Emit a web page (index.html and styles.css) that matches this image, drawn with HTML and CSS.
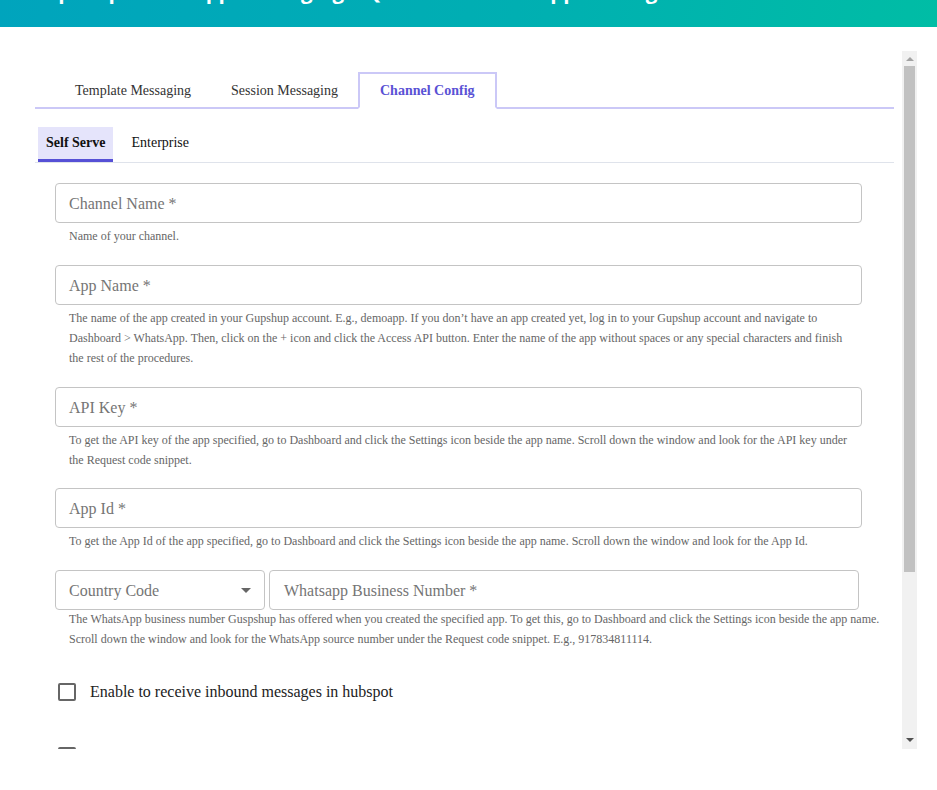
FILE: index.html
```html
<!DOCTYPE html>
<html lang="en">
<head>
<meta charset="utf-8">
<title>Channel Config</title>
<link rel="stylesheet" href="styles.css">
</head>
<body>
<header class="modal-header">
  <h1 class="modal-title">Gupshup WhatsApp Messaging – QA – Send WhatsApp Message</h1>
  <span class="modal-close">×</span>
</header>
<main class="modal-body">
  <div class="panel">
    <div class="panel-content">
      <nav class="tabs">
        <span class="tab">Template Messaging</span>
        <span class="tab">Session Messaging</span>
        <span class="tab tab-active">Channel Config</span>
      </nav>
      <nav class="subtabs">
        <span class="subtab subtab-active">Self Serve</span>
        <span class="subtab">Enterprise</span>
      </nav>
      <form class="form">
        <div class="field">
          <div class="input"><span class="placeholder">Channel Name *</span></div>
          <p class="help">Name of your channel.</p>
        </div>
        <div class="field">
          <div class="input"><span class="placeholder">App Name *</span></div>
          <p class="help">The name of the app created in your Gupshup account. E.g., demoapp. If you don’t have an app created yet, log in to your Gupshup account and navigate to Dashboard &gt; WhatsApp. Then, click on the + icon and click the Access API button. Enter the name of the app without spaces or any special characters and finish the rest of the procedures.</p>
        </div>
        <div class="field field-short">
          <div class="input"><span class="placeholder">API Key *</span></div>
          <p class="help">To get the API key of the app specified, go to Dashboard and click the Settings icon beside the app name. Scroll down the window and look for the API key under the Request code snippet.</p>
        </div>
        <div class="field">
          <div class="input"><span class="placeholder">App Id *</span></div>
          <p class="help">To get the App Id of the app specified, go to Dashboard and click the Settings icon beside the app name. Scroll down the window and look for the App Id.</p>
        </div>
        <div class="field field-wide">
          <div class="row">
            <div class="input select"><span class="placeholder">Country Code</span><span class="caret"></span></div>
            <div class="input number"><span class="placeholder">Whatsapp Business Number *</span></div>
          </div>
          <p class="help help-tight">The WhatsApp business number Guspshup has offered when you created the specified app. To get this, go to Dashboard and click the Settings icon beside the app name. Scroll down the window and look for the WhatsApp source number under the Request code snippet. E.g., 917834811114.</p>
        </div>
        <label class="check"><span class="box"></span>Enable to receive inbound messages in hubspot</label>
        <label class="check"><span class="box"></span>Enable message status updates</label>
      </form>
    </div>
    <div class="scrollbar">
      <span class="sb-btn"><span class="arrow-up"></span></span>
      <span class="sb-thumb"></span>
      <span class="sb-rest"></span>
      <span class="sb-btn"><span class="arrow-down"></span></span>
    </div>
  </div>
</main>
</body>
</html>
```

FILE: styles.css
```css
* { box-sizing: border-box; }
html, body { margin: 0; padding: 0; background: #fff; }
body {
  font-family: "Liberation Serif", "Times New Roman", serif;
  color: #222;
  width: 937px;
  height: 790px;
  overflow: hidden;
}
.modal-header {
  height: 27px;
  background: linear-gradient(100deg, #00a4bd 0%, #00afb2 55%, #00bda5 100%);
  display: flex;
  align-items: flex-start;
  justify-content: space-between;
  padding: 0 0 0 30px;
  overflow: hidden;
}
.modal-title {
  margin: -21px 0 0 0;
  font-family: "Open Sans", sans-serif;
  font-weight: bold;
  font-size: 20.5px;
  line-height: 24px;
  color: #fff;
  white-space: nowrap;
}
.modal-close {
  margin: -26px 0 0 0;
  font-family: "DejaVu Sans", sans-serif;
  font-size: 34px;
  line-height: 28px;
  color: #fff;
}
.modal-body {
  padding: 24px 20px 0 35px;
}
.panel {
  display: flex;
  height: 698px;
  overflow: hidden;
}
.panel-content {
  flex: 1;
  padding: 21px 8px 0 0;
  overflow: hidden;
}
.tabs {
  display: flex;
  padding-left: 20px;
  border-bottom: 2px solid #cbc8f7;
  height: 37px;
}
.tab {
  font-size: 14px;
  color: #333;
  padding: 1px 20px 0;
  line-height: 35px;
  height: 37px;
}
.tab-active {
  border: 2px solid #cbc8f7;
  border-bottom: 2px solid #fff;
  background: #fff;
  color: #5a52d5;
  font-weight: bold;
  padding: 0 20px;
  margin-bottom: -2px;
  height: 37px;
  line-height: 33px;
}
.subtabs {
  display: flex;
  gap: 10px;
  margin-top: 18px;
  padding-left: 3px;
  border-bottom: 1px solid #dfe3eb;
}
.subtab {
  font-size: 14px;
  color: #111;
  padding: 0 8px;
  height: 35px;
  line-height: 31px;
  border-bottom: 3px solid transparent;
}
.subtab-active {
  background: #e5e4fb;
  border-bottom-color: #5650d6;
  font-weight: bold;
}
.form {
  padding: 20px 0 0 20px;
}
.field {
  width: 807px;
  margin-bottom: 19px;
}
.field-short { margin-bottom: 18px; }
.field-wide { width: 839px; margin-bottom: 32px; }
.input {
  height: 40px;
  border: 1px solid #c4c4c4;
  border-radius: 4px;
  display: flex;
  align-items: center;
  padding: 2px 13px 0;
  background: #fff;
}
.placeholder {
  font-size: 16px;
  color: #757575;
}
.row { display: flex; gap: 4px; }
.select { width: 210px; justify-content: space-between; padding-right: 13px; }
.select .caret { margin-top: -2px; }
.number { width: 590px; padding-left: 14px; }
.caret {
  width: 0; height: 0;
  border-left: 5px solid transparent;
  border-right: 5px solid transparent;
  border-top: 5px solid #666;
}
.help {
  margin: 3px 0 0 0;
  padding: 0 14px;
  font-size: 12px;
  line-height: 20px;
  color: #666;
}
.help-tight { margin-top: -1px; }
.check {
  display: flex;
  align-items: center;
  gap: 14px;
  font-size: 16px;
  color: #222;
  height: 22px;
  margin: 0 0 42px 3px;
}
.box {
  width: 18px; height: 18px;
  border: 2px solid #666;
  border-radius: 2px;
  flex: none;
}
.scrollbar {
  width: 15px;
  flex: none;
  background: #f1f1f1;
  display: flex;
  flex-direction: column;
}
.sb-btn {
  height: 15px;
  display: flex;
  align-items: center;
  justify-content: center;
}
.sb-thumb {
  height: 506px;
  margin: 0 2px;
  background: #c1c1c1;
}
.sb-rest { flex: 1; }
.arrow-up {
  width: 0; height: 0;
  border-left: 4px solid transparent;
  border-right: 4px solid transparent;
  border-bottom: 4px solid #a3a3a3;
}
.arrow-down {
  width: 0; height: 0;
  border-left: 4px solid transparent;
  border-right: 4px solid transparent;
  border-top: 4px solid #505050;
  margin-top: -4px;
}
```
